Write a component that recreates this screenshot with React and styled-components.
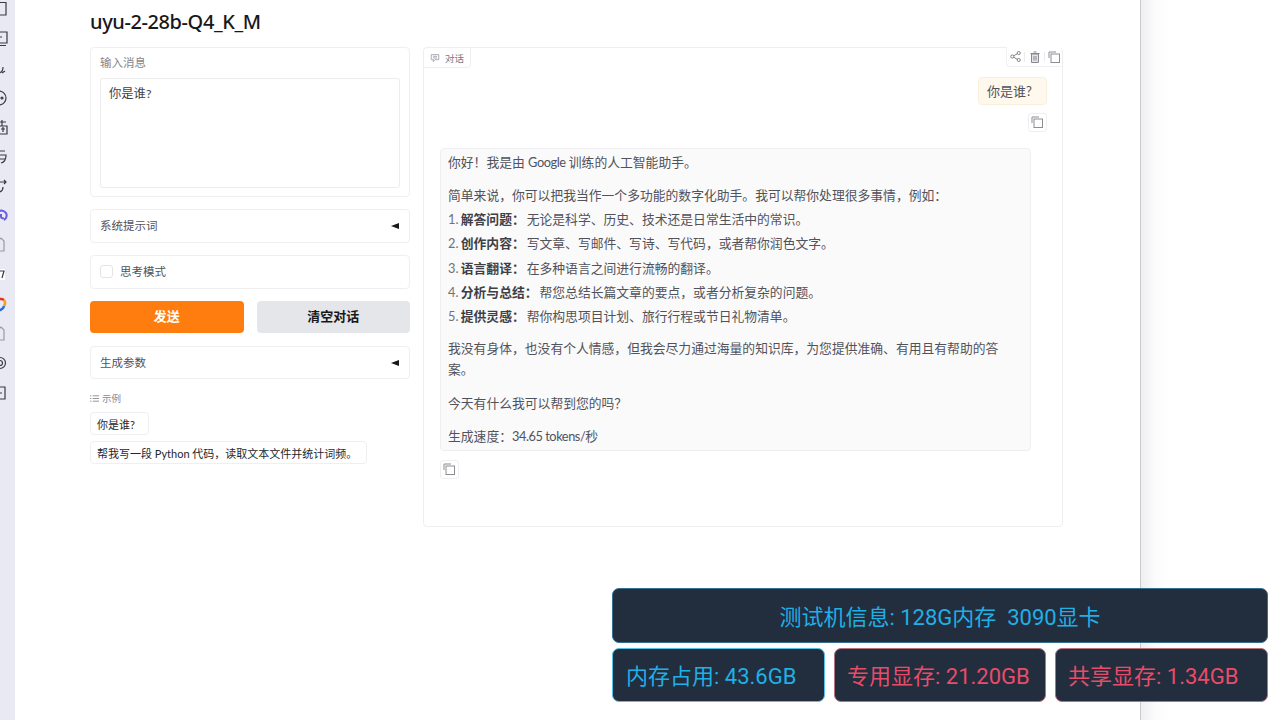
import React from "react";
import styled, { createGlobalStyle } from "styled-components";

const Global = createGlobalStyle`
  html, body { margin: 0; padding: 0; height: 100%; background: #fff; overflow: hidden; }
  body { font-family: Lato, "Noto Sans CJK SC", sans-serif; color: #27272a; }
  * { box-sizing: border-box; }
`;
const Page = styled.div`position: relative; display: flex; width: 1280px; height: 720px; overflow: hidden; background: #fff;`;
const Rail = styled.nav`width: 15px; flex: none; background: #e9e9f3; display: flex; flex-direction: column; gap: 9.5px;`;
const RailIcon = styled.svg`display: block; width: 15px; height: 20px; flex: none; fill: none; stroke: ${p => p.$c || "#3a3a44"}; stroke-width: 1.2;`;
const Main = styled.main`width: 1125px; flex: none; padding: 9px 0 0 75px;`;
const Gutter = styled.div`flex: 1; border-left: 1px solid #c9c9cf; background: linear-gradient(90deg, #efeff1 0, #fbfbfc 14px, #fff 28px);`;
const Title = styled.h1`margin: 0 0 15px; height: 23px; font-size: 20px; line-height: 26px; font-weight: 500; letter-spacing: -.4px; color: #18181b; font-family: "Noto Sans", sans-serif;`;
const Columns = styled.div`display: flex; gap: 13px; align-items: flex-start;`;
const Left = styled.div`width: 320px; flex: none; display: flex; flex-direction: column;`;
const Panel = styled.div`border: 1px solid #efeff1; border-radius: 4px; background: #fff;`;
const InputPanel = styled(Panel)`height: 150px; padding: 7px 9px 8px; margin-bottom: 12px;`;
const FieldLabel = styled.div`font-size: 11.5px; line-height: 16px; color: #85858c; margin-bottom: 7px;`;
const MessageBox = styled.div`height: 110px; border: 1px solid #ececef; border-radius: 3px; padding: 7px 8px; font-size: 12.3px; line-height: 16px; color: #3f3f46;`;
const Row = styled(Panel)`display: flex; align-items: center; justify-content: space-between; height: ${p => p.$h}px; padding: 0 10px 2px 9px; font-size: 11.5px; color: #52525b; margin-bottom: ${p => p.$mb}px;`;
const Caret = styled.span`width: 0; height: 0; margin-top: 2px; border-top: 3.5px solid transparent; border-bottom: 3.5px solid transparent; border-right: 8px solid #18181b;`;
const CheckRow = styled.div`display: flex; align-items: center; gap: 7px;`;
const Check = styled.span`width: 13px; height: 13px; margin-top: 1px; border: 1px solid #e4e4e7; border-radius: 3px; background: #fff;`;
const Buttons = styled.div`display: flex; gap: 13px; margin-bottom: 13px;`;
const Button = styled.div`flex: 1; height: 32px; padding-bottom: 3px; border-radius: 4px; display: flex; align-items: center; justify-content: center; font-size: 13px; font-weight: 700;
  background: ${p => p.$primary ? "#ff7d0f" : "#e5e6e9"}; color: ${p => p.$primary ? "#fff" : "#18181b"};`;
const ExampleLabel = styled.div`display: flex; align-items: center; gap: 3px; margin-top: 12px; margin-bottom: 7px; height: 14px; font-size: 9.5px; color: #8a8a92;`;
const Chip = styled.div`align-self: flex-start; height: 23px; min-width: 59px; padding: 0 9px 0 6px; margin-bottom: 6px; border: 1px solid #efeff1; border-radius: 4px; display: flex; align-items: center; font-size: 11px; color: #27272a; background: #fff; white-space: pre;`;
const Chat = styled(Panel)`position: relative; width: 640px; height: 480px; padding: 29px 15px 0 16px;`;
const ChatTag = styled.div`position: absolute; left: -1px; top: -1px; height: 21px; width: 48px; display: flex; align-items: center; gap: 5px; padding-left: 6px; font-size: 9.5px; color: #77777f; border: 1px solid #efeff1; border-radius: 4px 0 4px 0; background: #fff;`;
const Tools = styled.div`position: absolute; right: 1px; top: -1px; height: 20px; width: 55px; display: flex; align-items: center; justify-content: space-between; padding: 0 1px 0 3px; border: 1px solid #f0f0f2; border-top: 0; border-right: 0; border-radius: 0 0 0 4px; background: #fff;`;
const ToolDivider = styled.span`width: 1px; height: 10px; background: #ececef;`;
const UserLine = styled.div`display: flex; justify-content: flex-end;`;
const UserBubble = styled.div`height: 28px; width: 69px; padding: 0 8px 2px; display: flex; align-items: center; font-size: 13px; color: #52525b; background: #fef9ec; border: 1px solid #f8f0dd; border-radius: 4px;`;
const CopyLine = styled.div`display: flex; justify-content: ${p => p.$end ? "flex-end" : "flex-start"}; margin-top: ${p => p.$mt}px;`;
const CopyBtn = styled.div`width: 19px; height: 19px; padding: 0 1px 1px 0; display: flex; align-items: center; justify-content: center; border: 1px solid #efeff1; border-radius: 3px; background: #fff;`;
const BotBubble = styled.div`width: 591px; height: 303px; margin-top: 16px; padding: 3px 7px; background: #fafafa; border: 1px solid #efeff1; border-radius: 4px; font-size: 12.8px; line-height: 21px; color: #52525b;`;
const Para = styled.p`margin: ${p => p.$mt || 0}px 0 ${p => p.$mb}px;`;
const Item = styled.div`height: 24.3px; line-height: 22px; display: flex; white-space: pre;`;
const Num = styled.span`color: #71717a; margin-right: -1px;`;
const Strong = styled.b`color: #3f3f46; margin-right: 2px;`;
const Latin = styled.span`letter-spacing: -.45px;`;
const Overlay = styled.div`position: absolute; left: 612px; top: 588px; width: 656px; display: flex; flex-direction: column; gap: 5px;`;
const StatRow = styled.div`display: grid; grid-template-columns: 213px 212px 213px; gap: 9px;`;
const Stat = styled.div`height: ${p => p.$h}px; padding: 0 ${p => p.$pad || 0}px 2px; display: flex; align-items: center; justify-content: ${p => p.$wide ? "center" : "flex-start"};
  font-family: Roboto, "Noto Sans CJK SC", sans-serif; font-size: 22px; color: ${p => p.$red ? "#e84c68" : "#1fb0e6"}; background: rgba(27, 38, 56, .97);
  border: 1px solid ${p => p.$wide ? "#35708c" : p.$red ? "#b5727f" : "#58bfe6"}; border-radius: 7px; white-space: pre;`;

const CopyIcon = () => (
  <svg width="12" height="12" viewBox="0 0 12 12" fill="none" stroke="#8d8d94" strokeWidth="1">
    <rect x="3" y="3" width="8.500" height="8.500" /><path d="M1 7V1h7" />
  </svg>
);
const ShareIcon = () => (
  <svg width="11" height="11" viewBox="0 0 12 12" fill="none" stroke="#77777f" strokeWidth="1">
    <circle cx="2.500" cy="6" r="1.700" /><circle cx="9.500" cy="2.200" r="1.700" /><circle cx="9.500" cy="9.800" r="1.700" /><path d="M4 5.200 8 3M4 6.800 8 9" />
  </svg>
);
const TrashIcon = () => (
  <svg width="12" height="12" viewBox="0 0 12 12" fill="#e4e4e7" stroke="#88888f" strokeWidth="1">
    <path d="M2.500 3h7v8.500h-7zM1.500 2.500h9M4.500 1h3M5 5v4.500M7 5v4.500" />
  </svg>
);
const ChatIcon = () => (
  <svg width="10" height="10" viewBox="0 0 12 12" fill="none" stroke="#9a9aa2" strokeWidth="1">
    <path d="M1.500 2h9v6H6L4 10.500V8H1.500zM3.500 4h5M3.500 6h5" />
  </svg>
);
const ListIcon = () => (
  <svg width="9" height="9" viewBox="0 0 10 10" fill="none" stroke="#8a8a92" strokeWidth="1">
    <path d="M0 2h1.500M3 2h7M0 5h1.500M3 5h7M0 8h1.500M3 8h7" />
  </svg>
);

const rail = [
  <path d="M-4 3.500H6V16H-4" />,
  <><path d="M-4 3H7V14H-4" /><path d="M2 8H-2M-2 16.500H6" /></>,
  <path d="M3 9C3 14 1 15 -2 15M5 13 2 15" />,
  <><circle cx="-1" cy="10" r="7" /><circle cx="2" cy="10" r="1" fill="#999" /></>,
  <><path d="M-2 9H7V17H-2M2 3V9M0 5H6" /><path d="M1 12H5M3 10V15" /></>,
  <path d="M-2 4H5M-2 8H6C6 9 6 15 1 16M-2 12H5" />,
  <path d="M4 4 6 6 4 8M6 6H-2M3 11C3 15 1 16 -2 16" />,
  <g strokeWidth="2"><path d="M-2 13a5 5 0 1 1 6 1M1 8v3a2 2 0 0 0 3 1" /></g>,
  <path d="M-2 16V6L1 3 4 6V16Z" />,
  <><rect x="-1" y="4" width="6" height="11" fill="#fff" stroke="none" /><path d="M-1 6H4L2 13" /></>,
  <>
    <path d="M-4 10a5 5 0 0 1 8 -4" stroke="#e0352b" strokeWidth="2.500" />
    <path d="M4 6a5 5 0 0 1 0 6" stroke="#f0a020" strokeWidth="2.500" />
    <path d="M4 12a5 5 0 0 1 -8 3" stroke="#2a6fd6" strokeWidth="2.500" />
  </>,
  <path d="M-2 16V6L1 3 4 6V16Z" />,
  <><circle cx="0" cy="10" r="5.500" /><circle cx="0" cy="10" r="2.500" /></>,
  <><path d="M-4 4H5V16H-4" /><path d="M-1 10H2" /></>
];
const railStroke = i => (i === 7 ? "#6a5ce0" : i === 8 || i === 11 ? "#9a9aa2" : undefined);

const items = [
  ["解答问题：", "无论是科学、历史、技术还是日常生活中的常识。"],
  ["创作内容：", "写文章、写邮件、写诗、写代码，或者帮你润色文字。"],
  ["语言翻译：", "在多种语言之间进行流畅的翻译。"],
  ["分析与总结：", "帮您总结长篇文章的要点，或者分析复杂的问题。"],
  ["提供灵感：", "帮你构思项目计划、旅行行程或节日礼物清单。"]
];

export default function App() {
  return (
    <Page>
      <Global />
      <Rail>
        {rail.map((shape, i) => (
          <RailIcon key={i} viewBox="0 1 15 20" $c={railStroke(i)}>{shape}</RailIcon>
        ))}
      </Rail>
      <Main>
        <Title>uyu-2-28b-Q4_K_M</Title>
        <Columns>
          <Left>
            <InputPanel>
              <FieldLabel>输入消息</FieldLabel>
              <MessageBox>你是谁?</MessageBox>
            </InputPanel>
            <Row $h={34} $mb={12}>系统提示词<Caret /></Row>
            <Row $h={34} $mb={12}><CheckRow><Check />思考模式</CheckRow></Row>
            <Buttons>
              <Button $primary>发送</Button>
              <Button>清空对话</Button>
            </Buttons>
            <Row $h={33} $mb={0}>生成参数<Caret /></Row>
            <ExampleLabel><ListIcon />示例</ExampleLabel>
            <Chip>你是谁?</Chip>
            <Chip>帮我写一段 Python 代码，读取文本文件并统计词频。</Chip>
          </Left>
          <Chat>
            <ChatTag><ChatIcon />对话</ChatTag>
            <Tools><ShareIcon /><ToolDivider /><TrashIcon /><ToolDivider /><CopyIcon /></Tools>
            <UserLine><UserBubble>你是谁?</UserBubble></UserLine>
            <CopyLine $end $mt={8}><CopyBtn><CopyIcon /></CopyBtn></CopyLine>
            <BotBubble>
              <Para $mb={12}>你好！我是由 <Latin>Google</Latin> 训练的人工智能助手。</Para>
              <Para $mb={2}>简单来说，你可以把我当作一个多功能的数字化助手。我可以帮你处理很多事情，例如：</Para>
              {items.map(([b, t], i) => (
                <Item key={b}><Num>{i + 1}. </Num><Strong>{b}</Strong>{t}</Item>
              ))}
              <Para $mt={9} $mb={13}>我没有身体，也没有个人情感，但我会尽力通过海量的知识库，为您提供准确、有用且有帮助的答案。</Para>
              <Para $mb={12}>今天有什么我可以帮到您的吗？</Para>
              <Para $mb={0}>生成速度：<Latin>34.65 tokens/</Latin>秒</Para>
            </BotBubble>
            <CopyLine $mt={9}><CopyBtn><CopyIcon /></CopyBtn></CopyLine>
          </Chat>
        </Columns>
      </Main>
      <Gutter />
      <Overlay>
        <Stat $wide $h={55}>测试机信息: 128G内存  3090显卡</Stat>
        <StatRow>
          <Stat $h={54} $pad={13}>内存占用: 43.6GB</Stat>
          <Stat $h={54} $pad={12} $red>专用显存: 21.20GB</Stat>
          <Stat $h={54} $pad={12} $red>共享显存: 1.34GB</Stat>
        </StatRow>
      </Overlay>
    </Page>
  );
}
